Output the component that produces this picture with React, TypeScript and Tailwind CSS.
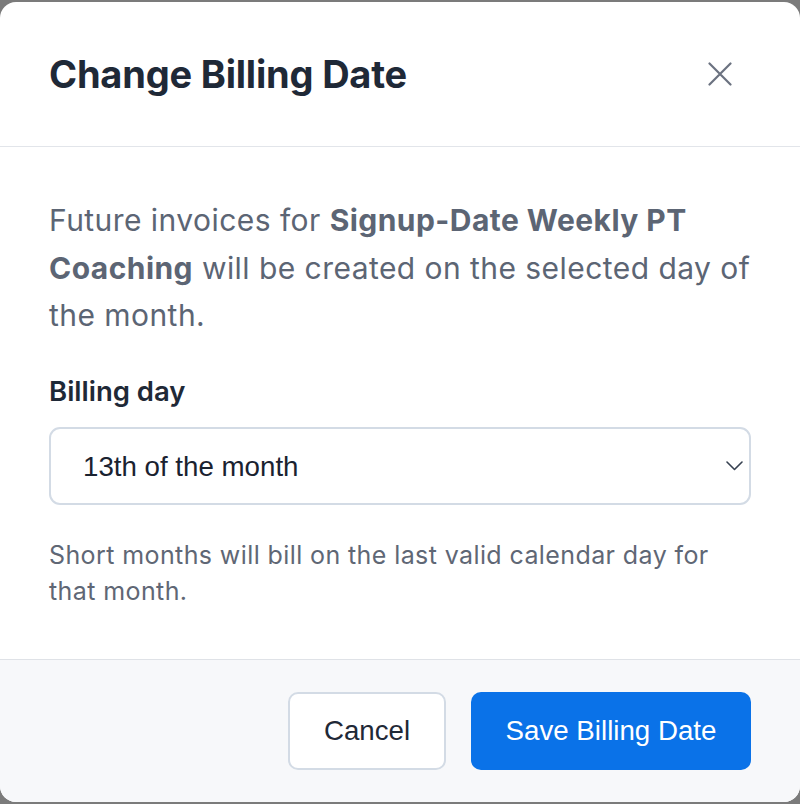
import React from "react";

const sans = { fontFamily: "Inter, 'Noto Sans', sans-serif" };

function CloseIcon() {
  return (
    <svg width="24" height="24" viewBox="0 0 24 24" fill="none">
      <path
        d="M1.5 1.5L22.5 22.5M22.5 1.5L1.5 22.5"
        stroke="#6b7280"
        strokeWidth="2.2"
        strokeLinecap="round"
      />
    </svg>
  );
}

function Chevron() {
  return (
    <svg width="17" height="10" viewBox="0 0 17 10" fill="none">
      <path
        d="M1 1L8.5 8.5L16 1"
        stroke="#374151"
        strokeWidth="1.6"
        strokeLinecap="round"
        strokeLinejoin="round"
      />
    </svg>
  );
}

export default function App() {
  return (
    <div className="min-h-screen w-full bg-[#7b7b7b] py-[2px]">
      <div
        className="w-[800px] h-[800px] bg-white rounded-[16px] overflow-hidden flex flex-col"
        style={sans}
      >
        {/* header */}
        <div className="flex items-center justify-between pl-[49px] pr-[68px] h-[145px] border-b border-[#e2e5ea]">
          <h2 className="text-[38px] leading-[46px] font-bold text-[#1f2937] tracking-[-0.2px]">
            Change Billing Date
          </h2>
          <button className="p-0">
            <CloseIcon />
          </button>
        </div>

        {/* body */}
        <div className="flex-1 px-[49px] pt-[50px]">
          <p className="text-[30px] leading-[47.5px] tracking-[0.45px] text-[#5c6574]">
            Future invoices for <b className="font-bold">Signup-Date Weekly PT Coaching</b>{" "}
            will be created on the selected day of the month.
          </p>

          <label className="block mt-[33px] text-[27.5px] leading-[36px] font-semibold text-[#1f2937]">
            Billing day
          </label>

          <div className="mt-[18px] h-[78px] border-2 border-[#d3dbe5] rounded-[11px] flex items-center justify-between pl-[32px] pr-[6px]">
            <span
              className="text-[27.7px] text-[#1a2230] pt-[3px]"
              style={{ fontFamily: "'Liberation Sans', Arial, sans-serif" }}
            >
              13th of the month
            </span>
            <Chevron />
          </div>

          <p className="mt-[32px] text-[25px] leading-[36px] tracking-[0.4px] text-[#5f6775]">
            Short months will bill on the last valid calendar day for that month.
          </p>
        </div>

        {/* footer */}
        <div
          className="h-[143px] border-t border-[#dfe2e7] bg-[#f7f8fa] flex items-center justify-end gap-[25px] pr-[49px]"
          style={{ fontFamily: "'Liberation Sans', Arial, sans-serif" }}
        >
          <button className="h-[78px] w-[158px] bg-white border-2 border-[#d3dbe5] rounded-[10px] text-[27.7px] text-[#1f2937]">
            Cancel
          </button>
          <button className="h-[78px] w-[280px] bg-[#0a72e8] rounded-[10px] text-[27.7px] text-white">
            Save Billing Date
          </button>
        </div>
      </div>
    </div>
  );
}
